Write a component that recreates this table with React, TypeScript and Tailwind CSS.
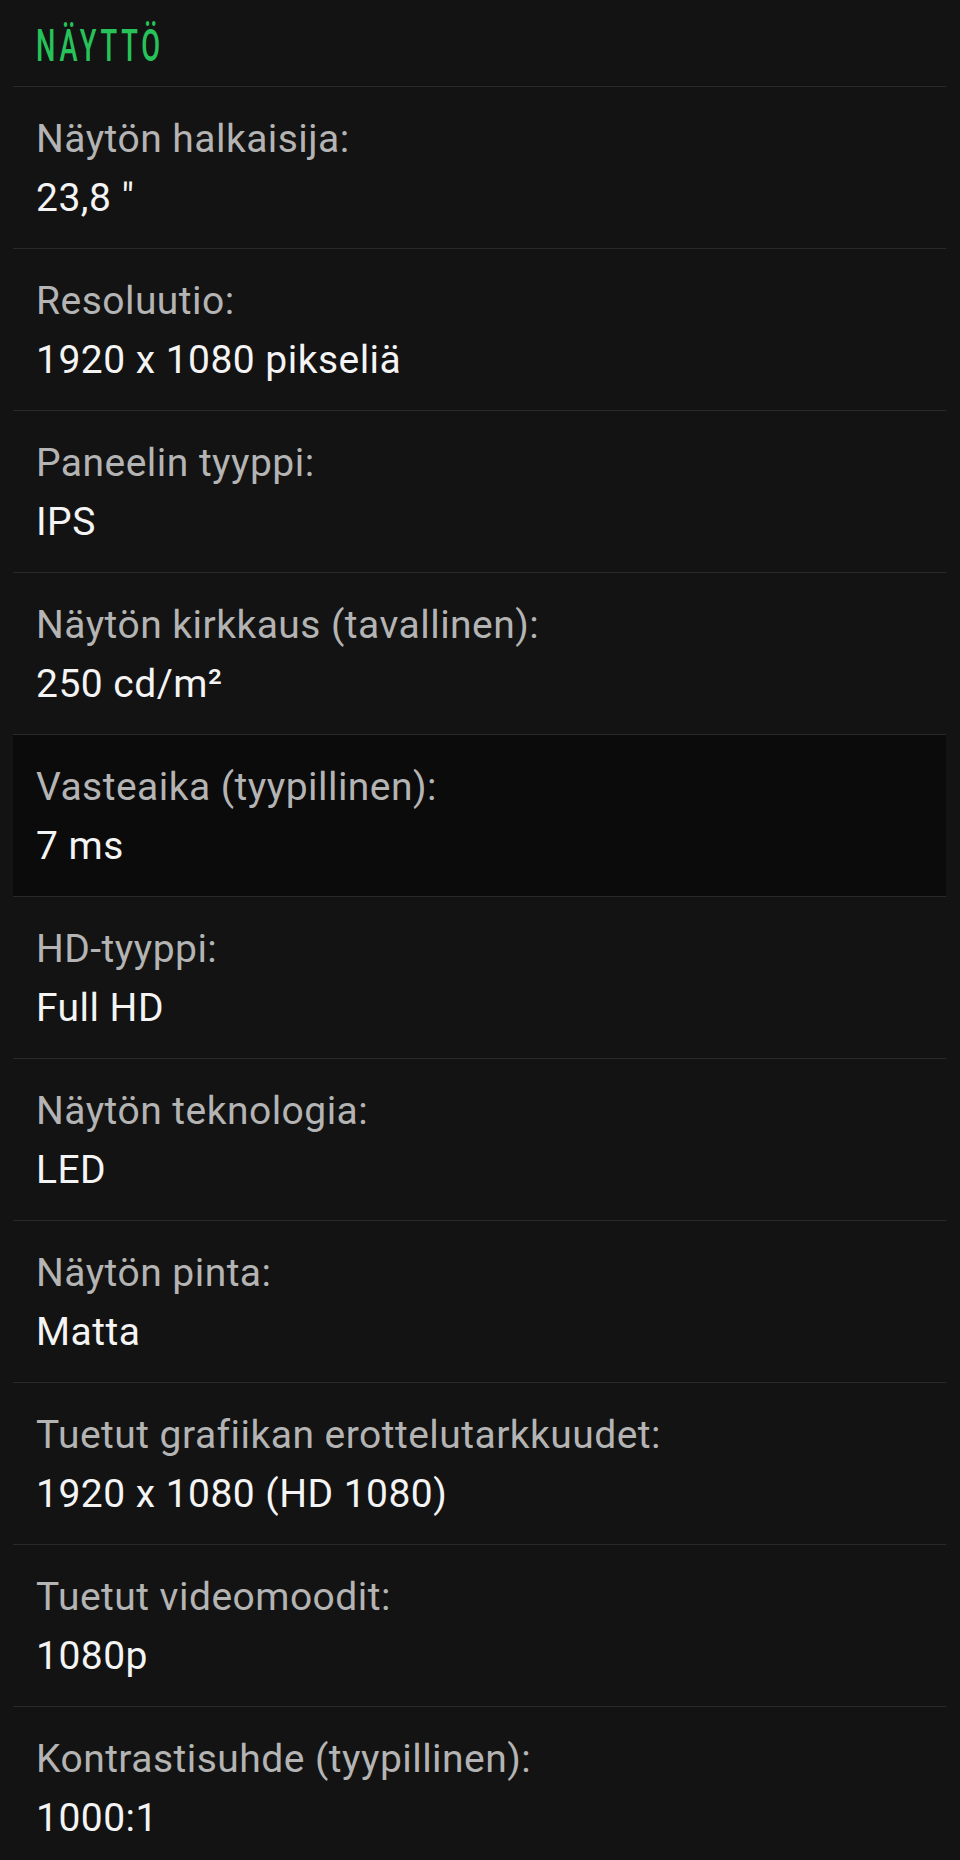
const specs = [
  { label: 'Näytön halkaisija:', value: '23,8 "' },
  { label: 'Resoluutio:', value: '1920 x 1080 pikseliä' },
  { label: 'Paneelin tyyppi:', value: 'IPS' },
  { label: 'Näytön kirkkaus (tavallinen):', value: '250 cd/m²' },
  { label: 'Vasteaika (tyypillinen):', value: '7 ms', active: true },
  { label: 'HD-tyyppi:', value: 'Full HD' },
  { label: 'Näytön teknologia:', value: 'LED' },
  { label: 'Näytön pinta:', value: 'Matta' },
  { label: 'Tuetut grafiikan erottelutarkkuudet:', value: '1920 x 1080 (HD 1080)' },
  { label: 'Tuetut videomoodit:', value: '1080p' },
  { label: 'Kontrastisuhde (tyypillinen):', value: '1000:1' },
]

const SpecRow = ({ label, value, active }: { label: string; value: string; active?: boolean }) => (
  <div className={`border-t border-[#2a2a2a] pl-[23px] pt-[23px] pb-[20px] ${active ? 'bg-[#0b0b0b]' : ''}`}>
    <div className="text-[39px] leading-[59px] tracking-[0.012em] text-[#b4b4b4]">{label}</div>
    <div className="text-[39px] leading-[59px] tracking-[0.012em] text-[#f4f4f4]">{value}</div>
  </div>
)

export default function App() {
  return (
    <div className="min-h-[1860px] bg-[#131313] font-['Roboto','Liberation_Sans',sans-serif]">
      <div className="ml-[13px] mr-[14px]">
        <div className="flex h-[86px] items-start pl-[23px] pt-[27px]">
          <span className="block origin-left scale-x-[0.62] text-[44px] font-medium leading-[38px] tracking-[0.14em] text-[#27c25a]">
            NÄYTTÖ
          </span>
        </div>
        {specs.map((s) => (
          <SpecRow key={s.label} {...s} />
        ))}
      </div>
    </div>
  )
}
